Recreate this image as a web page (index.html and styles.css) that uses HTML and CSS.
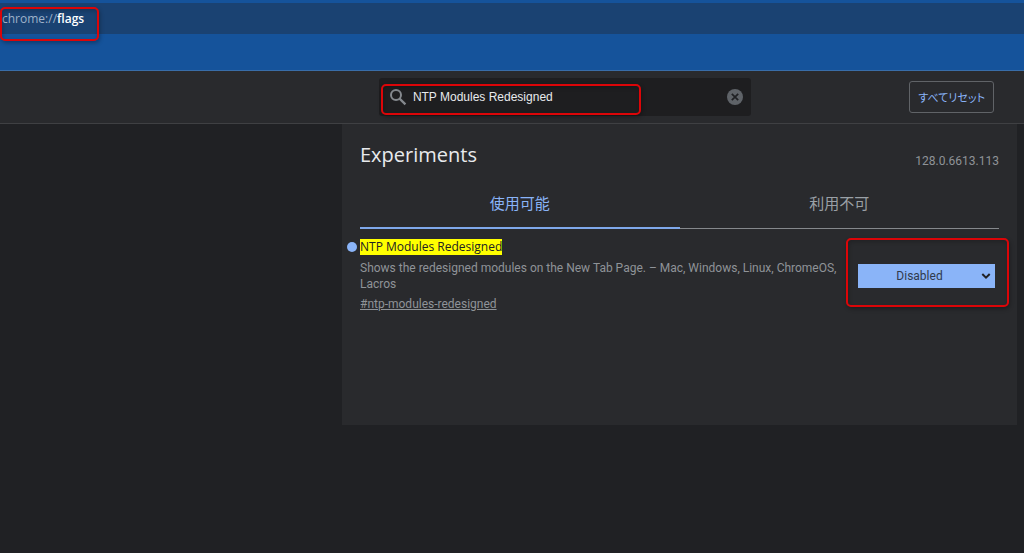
FILE: index.html
```html
<!DOCTYPE html>
<html lang="ja">
<head>
<meta charset="utf-8">
<meta name="viewport" content="width=device-width, initial-scale=1">
<title>Experiments</title>
<link rel="stylesheet" href="styles.css">
</head>
<body>
<div class="browser-bar">
  <div class="address"><span class="scheme">chrome://</span><strong>flags</strong>
    <span class="mark mark-address"></span>
  </div>
</div>
<header class="toolbar">
  <div class="search">
    <svg class="search-icon" viewBox="0 0 18 18" aria-hidden="true"><circle cx="7" cy="7" r="5" fill="none" stroke="currentColor" stroke-width="2"/><path d="M10.6 10.6L16.4 16.4" stroke="currentColor" stroke-width="2.2" fill="none"/></svg>
    <input class="search-input" type="text" aria-label="Search flags" value="NTP Modules Redesigned">
    <button class="clear" type="button" aria-label="Clear search">
      <svg viewBox="0 0 16 16" aria-hidden="true"><circle cx="8" cy="8" r="8" fill="#5f6368"/><path d="M4.8 4.8L11.2 11.2M11.2 4.8L4.8 11.2" stroke="#202124" stroke-width="1.7"/></svg>
    </button>
    <span class="mark mark-search"></span>
  </div>
  <button class="reset" type="button">すべてリセット</button>
</header>
<main class="panel">
  <div class="heading">
    <h1 class="title">Experiments</h1>
    <span class="version">128.0.6613.113</span>
  </div>
  <div class="tabs" role="tablist">
    <button class="tab tab-active" type="button" role="tab" aria-selected="true">使用可能</button>
    <button class="tab" type="button" role="tab" aria-selected="false">利用不可</button>
  </div>
  <section class="experiment">
    <div class="details">
      <h2 class="name"><label for="flag"><mark class="hit">NTP Modules Redesigned</mark></label></h2>
      <p class="description">Shows the redesigned modules on the New Tab Page. – Mac, Windows, Linux, ChromeOS, Lacros</p>
      <a class="permalink" href="#ntp-modules-redesigned">#ntp-modules-redesigned</a>
    </div>
    <div class="choice">
      <select class="select" id="flag">
        <option>Default</option>
        <option>Enabled</option>
        <option selected>Disabled</option>
      </select>
      <svg class="chevron" viewBox="0 0 10 8" aria-hidden="true"><path d="M1.3 2L5 5.6L8.7 2" fill="none" stroke="#202124" stroke-width="2"/></svg>
      <span class="mark mark-choice"></span>
    </div>
  </section>
</main>
</body>
</html>
```
FILE: styles.css
```css
* { box-sizing: border-box; }

body {
  margin: 0;
  min-height: 100vh;
  background: #202124;
  color: #e8eaed;
  font: 12px/16px "Open Sans", "Noto Sans CJK JP", sans-serif;
}

button, input, select { font: inherit; margin: 0; }

.browser-bar {
  padding: 3px 0 36px;
  background: #15539b;
  border-bottom: 1px solid #396da8;
}

.address {
  position: relative;
  padding: 8px 2px 7px;
  background: #1a4272;
  color: #fff;
}

.address strong { font-weight: 600; }
.scheme { color: #9fb2c9; }

.toolbar {
  display: flex;
  align-items: center;
  justify-content: space-between;
  height: 53px;
  padding: 0 30px 0 37%;
  background: #292a2d;
  border-bottom: 1px solid #3f4043;
}

.search {
  position: relative;
  display: flex;
  align-items: center;
  gap: 6px;
  width: 372px;
  height: 38px;
  padding: 0 8px 0 10px;
  border-radius: 3px;
  background: #1e1e20;
}

.search-icon { width: 18px; height: 18px; color: #85898e; }

.search-input {
  flex: 1;
  min-width: 0;
  padding: 0;
  border: 0;
  outline: 0;
  background: none;
  color: #e8eaed;
  font: 12px/16px "Liberation Sans", Arial, sans-serif;
}

.clear { display: flex; padding: 0; border: 0; background: none; }
.clear svg { width: 16px; height: 16px; }

.reset {
  height: 32px;
  padding: 0 8px;
  border: 1px solid #606367;
  border-radius: 3px;
  background: none;
  color: #8ab4f8;
  font-family: "Noto Sans CJK JP", sans-serif;
  font-size: 11px;
  font-feature-settings: "palt";
}

.panel {
  min-height: 301px;
  margin: 0 7px 0 342px;
  padding: 16px 18px 0;
  background: #292a2d;
}

.heading { display: flex; align-items: center; justify-content: space-between; }
.title { margin: 0; font-size: 20px; line-height: 24px; font-weight: 400; }
.version { padding-top: 13px; color: #8f9398; font-family: Roboto, sans-serif; }

.tabs { display: flex; margin-top: 14px; }

.tab {
  flex: 1;
  height: 46px;
  padding: 0 0 5px;
  border: 0;
  border-bottom: 1px solid #85888c;
  background: none;
  color: #9aa0a6;
  font: 15px/20px "Noto Sans CJK JP", sans-serif;
}

.tab-active { padding-bottom: 4px; border-bottom: 2px solid #7fa8ea; color: #8ab4f8; }

.experiment { display: flex; align-items: center; justify-content: space-between; padding: 10px 4px 0 0; }
.details { width: 485px; font-family: Roboto, sans-serif; }
.name { display: flex; align-items: center; margin: 0 0 5px -13px; font-size: 12px; line-height: 16px; font-weight: 400; font-family: "Open Sans", sans-serif; }
.name::before { content: ""; width: 10px; height: 10px; margin-right: 3px; border-radius: 50%; background: #8ab4f8; }
.hit { display: block; background: #ff0; color: #202124; }
.description { margin: 0 0 4px; color: #8f9398; }
.permalink { color: #8f9398; }

.choice { position: relative; }

.select {
  display: block;
  width: 137px;
  height: 24px;
  padding: 0 14px 0 0;
  border: 0;
  border-radius: 0;
  appearance: none;
  background: #8ab4f8;
  color: #303a4c;
  font: 12px/16px Roboto, sans-serif;
  text-align: center;
  text-align-last: center;
}

.chevron { position: absolute; top: 8px; right: 4px; width: 10px; height: 8px; pointer-events: none; }

.mark {
  position: absolute;
  border: 2px solid #dc0508;
  border-radius: 5px;
  box-shadow: 1px 2px 4px rgba(0, 0, 0, .3), inset 1px 2px 4px rgba(0, 0, 0, .2);
  pointer-events: none;
}

.mark-address { top: 4px; left: 0; width: 99px; height: 34px; }
.mark-search { top: 6px; left: 2px; width: 260px; height: 31px; }
.mark-choice { inset: -26px -14px -19px -12px; }
```
